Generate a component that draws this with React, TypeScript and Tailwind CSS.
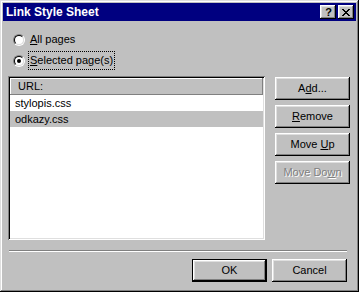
import React from 'react';

const raised =
  'shadow-[inset_-1px_-1px_#000,inset_1px_1px_#fff,inset_-2px_-2px_#808080,inset_2px_2px_#dfdfdf]';

function Radio({ checked }: { checked?: boolean }) {
  return (
    <div className="w-[12px] h-[12px] shrink-0 rounded-full border border-t-[#808080] border-l-[#808080] border-b-white border-r-white">
      <div className="w-full h-full rounded-full bg-white border border-t-black border-l-black border-b-[#dfdfdf] border-r-[#dfdfdf] flex items-center justify-center">
        {checked && <div className="w-[4px] h-[4px] rounded-full bg-black" />}
      </div>
    </div>
  );
}

function Button({
  children,
  disabled,
  isDefault,
}: {
  children: React.ReactNode;
  disabled?: boolean;
  isDefault?: boolean;
}) {
  const inner = (
    <div
      className={`flex items-center justify-center bg-[#c0c0c0] ${raised} ${
        isDefault ? 'w-[73px] h-[21px]' : 'w-[75px] h-[23px]'
      } ${disabled ? 'text-[#808080] [text-shadow:1px_1px_#fff]' : 'text-black'}`}
    >
      <span>{children}</span>
    </div>
  );
  if (isDefault) return <div className="border border-black">{inner}</div>;
  return inner;
}

export default function App() {
  return (
    <div
      className="w-[359px] h-[292px] bg-[#c0c0c0] p-[3px] flex flex-col text-[11px] leading-none text-black shadow-[inset_-1px_-1px_#000,inset_1px_1px_#dfdfdf,inset_-2px_-2px_#808080,inset_2px_2px_#fff]"
      style={{ fontFamily: '"Liberation Sans", Arial, sans-serif' }}
    >
      {/* title bar */}
      <div className="h-[18px] bg-[#000080] flex items-center pl-[3px] pr-[2px]">
        <span className="text-white font-bold text-[12px] flex-1">Link Style Sheet</span>
        <div className={`w-[16px] h-[14px] bg-[#c0c0c0] ${raised} flex items-center justify-center font-bold text-[11px] pl-[1px]`}>
          ?
        </div>
        <div className={`w-[16px] h-[14px] ml-[2px] bg-[#c0c0c0] ${raised} flex items-center justify-center`}>
          <svg width="8" height="7" viewBox="0 0 8 7">
            <path d="M0 0h2v1h1v1h2v-1h1v-1h2v1h-1v1h-1v1h-1v1h1v1h1v1h1v1h-2v-1h-1v-1h-2v1h-1v1h-2v-1h1v-1h1v-1h1v-1h-1v-1h-1v-1h-1z" fill="#000" />
          </svg>
        </div>
      </div>

      {/* radios */}
      <div className="mt-[8px] pl-[10px] flex flex-col">
        <div className="h-[21px] flex items-center">
          <Radio />
          <span className="ml-[4px] px-[1px] py-[3px]">
            <u>A</u>ll pages
          </span>
        </div>
        <div className="h-[21px] flex items-center">
          <Radio checked />
          <span className="ml-[4px] px-[1px] py-[3px] outline outline-1 outline-dotted outline-black">
            <u>S</u>elected page(s)
          </span>
        </div>
      </div>

      {/* list + side buttons */}
      <div className="mt-[5px] pl-[5px] flex">
        <div className="w-[257px] h-[164px] bg-white shadow-[inset_1px_1px_#808080,inset_-1px_-1px_#fff,inset_2px_2px_#000,inset_-2px_-2px_#dfdfdf] p-[2px] flex flex-col">
          <div className="h-[17px] bg-[#c0c0c0] flex items-center pl-[8px] shadow-[inset_-1px_-1px_#808080,inset_1px_1px_#fff]">
            URL:
          </div>
          <div className="h-[16px] flex items-center pl-[5px]">stylopis.css</div>
          <div className="h-[16px] flex items-center pl-[5px] bg-[#c0c0c0]">odkazy.css</div>
        </div>
        <div className="ml-[10px] mt-[1px] flex flex-col gap-[5px]">
          <Button>
            A<u>d</u>d...
          </Button>
          <Button>
            <u>R</u>emove
          </Button>
          <Button>
            Move <u>U</u>p
          </Button>
          <Button disabled>
            Move Do<u>w</u>n
          </Button>
        </div>
      </div>

      {/* separator */}
      <div className="mt-[10px] ml-[6px] w-[338px] h-[2px] border-t border-t-[#808080] border-b border-b-white" />

      {/* bottom buttons */}
      <div className="mt-[7px] pr-[9px] flex justify-end gap-[5px]">
        <Button isDefault>OK</Button>
        <Button>Cancel</Button>
      </div>
    </div>
  );
}
